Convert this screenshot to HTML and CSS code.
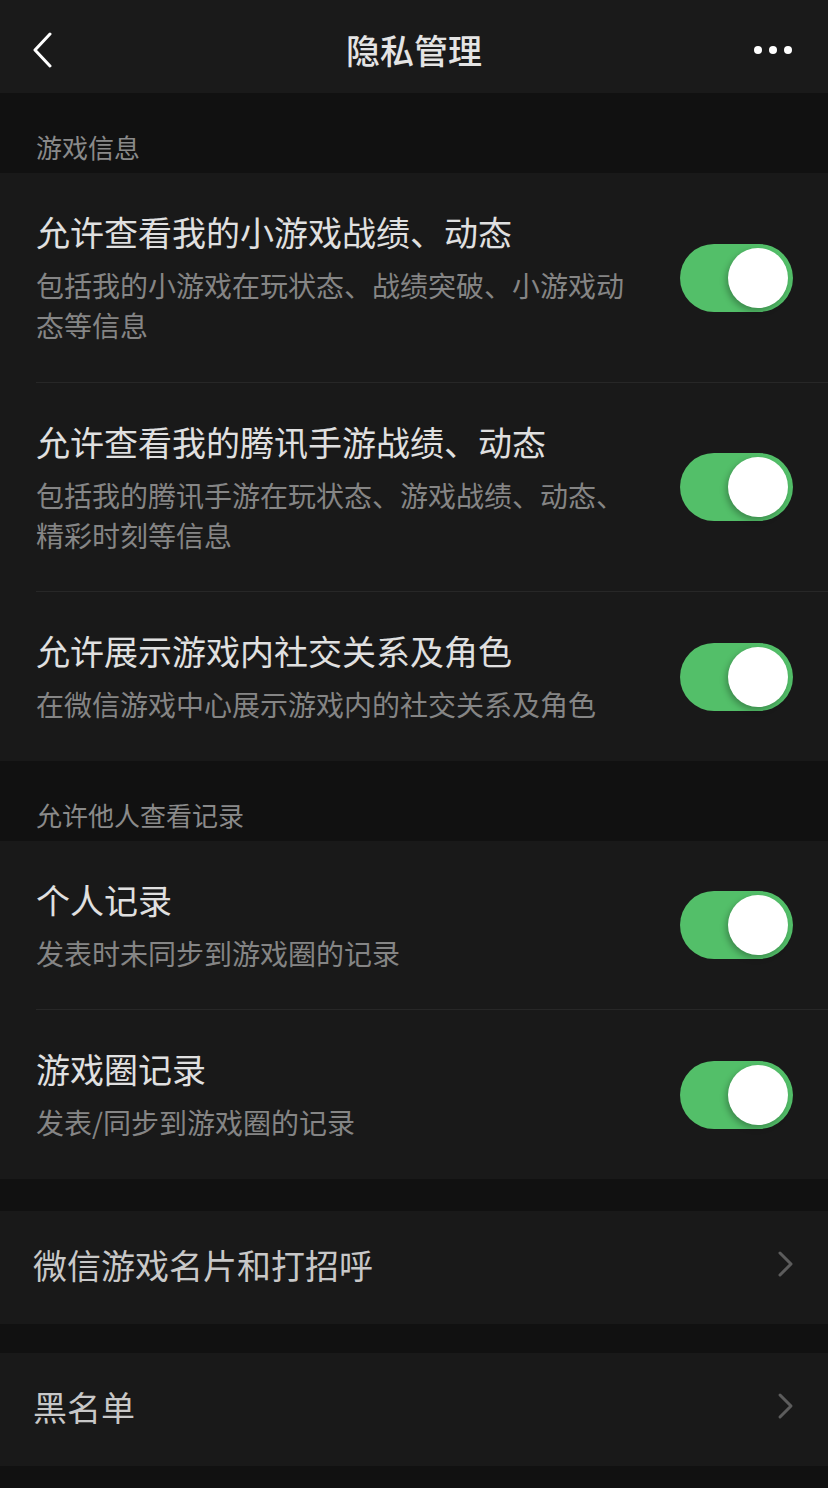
FILE: index.html
```html
<!DOCTYPE html>
<html lang="zh-CN">
<head>
<meta charset="utf-8">
<title>隐私管理</title>
<link rel="stylesheet" href="styles.css">
</head>
<body>
<div class="page">
  <header class="navbar">
    <span class="nav-back">
      <svg width="24" height="36" viewBox="0 0 24 36"><path d="M19 2 L4 18 L19 34" fill="none" stroke="#ffffff" stroke-width="3" stroke-linecap="round" stroke-linejoin="round"/></svg>
    </span>
    <h1 class="nav-title">隐私管理</h1>
    <span class="nav-more"><i></i><i></i><i></i></span>
  </header>

  <div class="section-header">游戏信息</div>
  <section class="card">
    <div class="row">
      <div class="row-text">
        <div class="row-title">允许查看我的小游戏战绩、动态</div>
        <div class="row-desc">包括我的小游戏在玩状态、战绩突破、小游戏动态等信息</div>
      </div>
      <span class="switch on"><span class="knob"></span></span>
    </div>
    <div class="row">
      <div class="row-text">
        <div class="row-title">允许查看我的腾讯手游战绩、动态</div>
        <div class="row-desc">包括我的腾讯手游在玩状态、游戏战绩、动态、精彩时刻等信息</div>
      </div>
      <span class="switch on"><span class="knob"></span></span>
    </div>
    <div class="row">
      <div class="row-text">
        <div class="row-title">允许展示游戏内社交关系及角色</div>
        <div class="row-desc">在微信游戏中心展示游戏内的社交关系及角色</div>
      </div>
      <span class="switch on"><span class="knob"></span></span>
    </div>
  </section>

  <div class="section-header">允许他人查看记录</div>
  <section class="card">
    <div class="row">
      <div class="row-text">
        <div class="row-title">个人记录</div>
        <div class="row-desc">发表时未同步到游戏圈的记录</div>
      </div>
      <span class="switch on"><span class="knob"></span></span>
    </div>
    <div class="row">
      <div class="row-text">
        <div class="row-title">游戏圈记录</div>
        <div class="row-desc">发表/同步到游戏圈的记录</div>
      </div>
      <span class="switch on"><span class="knob"></span></span>
    </div>
  </section>

  <section class="link-row first">
    <span class="link-label">微信游戏名片和打招呼</span>
    <svg class="chevron" width="18" height="28" viewBox="0 0 18 28"><path d="M3 3 L14 14 L3 25" fill="none" stroke="#5c5c5c" stroke-width="3" stroke-linecap="round" stroke-linejoin="round"/></svg>
  </section>
  <section class="link-row second">
    <span class="link-label">黑名单</span>
    <svg class="chevron" width="18" height="28" viewBox="0 0 18 28"><path d="M3 3 L14 14 L3 25" fill="none" stroke="#5c5c5c" stroke-width="3" stroke-linecap="round" stroke-linejoin="round"/></svg>
  </section>
</div>
</body>
</html>
```

FILE: styles.css
```css
* { box-sizing: border-box; }

html, body {
  margin: 0;
  padding: 0;
  background: #111111;
}

body {
  font-family: "Noto Sans CJK SC", "Noto Sans", sans-serif;
  width: 828px;
  min-height: 1488px;
}

.page {
  display: flex;
  flex-direction: column;
  min-height: 1488px;
  background: #111111;
}

.navbar {
  height: 93px;
  background: #1a1a1a;
  display: flex;
  align-items: center;
  justify-content: space-between;
  padding: 6px 36px 0 31px;
  position: relative;
}

.nav-back {
  display: flex;
  width: 24px;
  height: 36px;
}

.nav-title {
  position: absolute;
  left: 0;
  right: 0;
  top: 0;
  text-align: center;
  margin: 0;
  padding-top: 3px;
  font-size: 34px;
  font-weight: 500;
  color: #e4e4e4;
  line-height: 93px;
  pointer-events: none;
}

.nav-more {
  display: flex;
  gap: 7px;
  align-items: center;
}

.nav-more i {
  display: block;
  width: 8px;
  height: 8px;
  border-radius: 50%;
  background: #ffffff;
}

.section-header {
  height: 80px;
  padding: 36px 0 0 36px;
  font-size: 26px;
  line-height: 36px;
  color: #8a8a8a;
}

.card {
  background: #191919;
  padding-left: 36px;
}

.row {
  display: flex;
  align-items: center;
  padding: 37px 35px 36.5px 0;
  gap: 44px;
  border-top: 1px solid #272727;
}

.row:first-child {
  border-top: none;
}

.row-text {
  flex: 1;
  min-width: 0;
  display: flex;
  flex-direction: column;
  gap: 11px;
}

.row-title {
  font-size: 34px;
  line-height: 44px;
  color: #e0e0e0;
}

.row-desc {
  font-size: 28px;
  line-height: 40px;
  color: #858585;
}

.switch {
  flex: none;
  width: 113px;
  height: 68px;
  border-radius: 34px;
  background: #53bf69;
  position: relative;
}

.switch .knob {
  position: absolute;
  top: 4px;
  right: 5px;
  width: 60px;
  height: 60px;
  border-radius: 50%;
  background: #ffffff;
  box-shadow: -2px 3px 6px rgba(0, 0, 0, 0.28);
}

.link-row {
  background: #191919;
  height: 113px;
  display: flex;
  align-items: center;
  justify-content: space-between;
  padding: 0 33px 0 33px;
}

.link-row.first { margin-top: 32px; }
.link-row.second { margin-top: 29px; }

.link-label {
  font-size: 34px;
  color: #c8c8c8;
  line-height: 44px;
  margin-top: -4px;
}

.chevron {
  display: block;
  flex: none;
  margin-top: -6px;
}
```
